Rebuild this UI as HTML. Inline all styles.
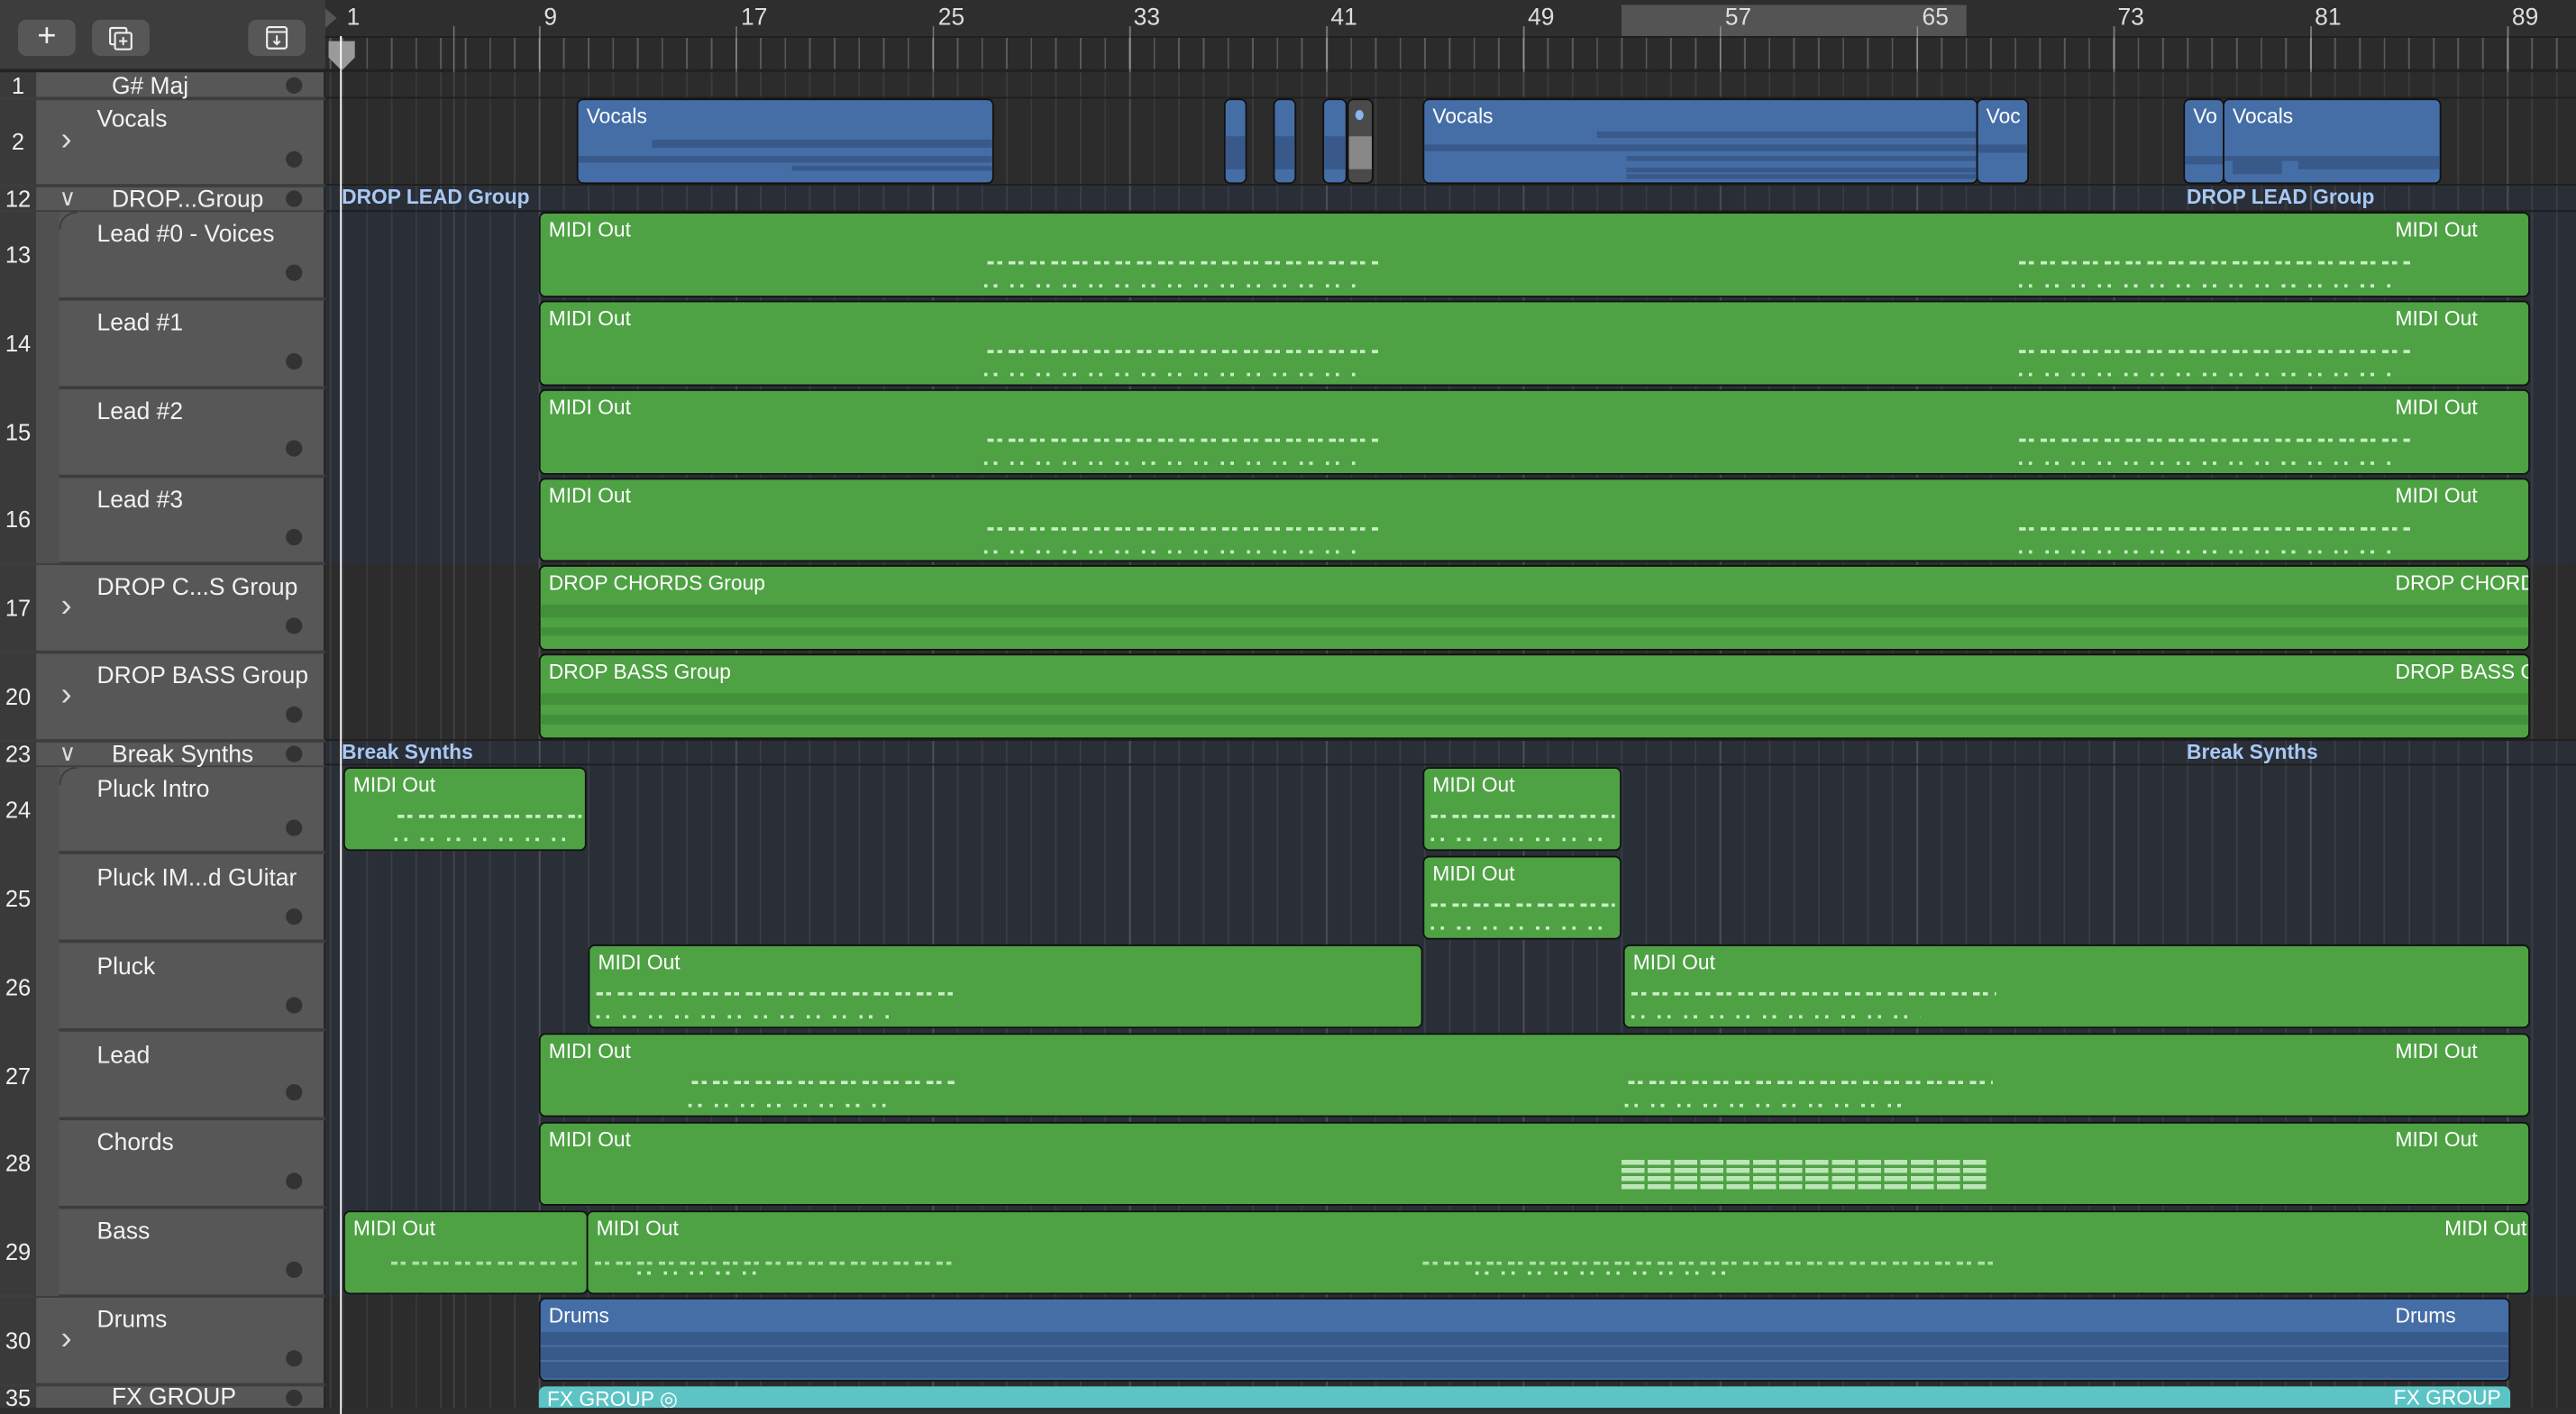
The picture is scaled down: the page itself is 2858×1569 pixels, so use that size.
<!DOCTYPE html>
<html><head><meta charset="utf-8">
<style>
html,body{margin:0;padding:0;background:#262626;overflow:hidden;width:2858px;height:1568px}
#w{position:absolute;left:0;top:0;width:1568px;height:861px;transform:scale(1.82270);transform-origin:0 0;font-family:"Liberation Sans",sans-serif;color:#fff;overflow:hidden;background:#2b2b2b}
.a{position:absolute}
.grid{position:absolute;left:198px;right:0;background-image:repeating-linear-gradient(90deg,rgba(255,255,255,0.07) 0 1px,transparent 1px 14.975px);background-position:10px 0}
.hdr{position:absolute;left:22px;width:175px;background:#575757;border-bottom:1px solid #3c3c3c}
.num{position:absolute;left:0;width:22px;text-align:center;font-size:14px;color:#eee}
.nm{position:absolute;font-size:14.5px;color:#f2f2f2;white-space:nowrap;margin-top:1px}
.dot{position:absolute;left:174px;width:10px;height:10px;border-radius:50%;background:#333}
.g{position:absolute;background:#4ea244;border:1px solid #111;border-radius:4px;box-sizing:border-box;overflow:hidden}
.b{position:absolute;background:#456ea6;border:1px solid #111;border-radius:4px;box-sizing:border-box;overflow:hidden}
.lb{position:absolute;top:3px;font-size:12.5px;color:#fff;white-space:nowrap}
.n1{position:absolute;height:2px;background:repeating-linear-gradient(90deg,#c8eec4 0 4px,transparent 4px 6px,#c8eec4 6px 9px,transparent 9px 13px)}
.n2{position:absolute;height:2px;background:repeating-linear-gradient(90deg,#c8eec4 0 2px,transparent 2px 6px,#c8eec4 6px 8px,transparent 8px 16px)}
.gl{position:absolute;font-size:12.5px;font-weight:bold;color:#a8c9f5}
.ch{position:absolute;left:36px;font-size:14px;color:#ddd}
.cr{position:absolute;left:37px;font-size:20px;line-height:20px;color:#ddd}
</style></head><body><div id="w">

<div class="a" style="left:0;top:0;width:198px;height:44px;background:#3d3d3d;border-bottom:1px solid #2a2a2a"></div>
<div class="a" style="left:11px;top:12px;width:35px;height:22px;background:#575757;border-radius:5px;text-align:center;font-size:20px;line-height:21px;color:#eee">+</div>
<div class="a" style="left:56px;top:12px;width:35px;height:22px;background:#575757;border-radius:5px"><svg width="35" height="22"><rect x="11" y="5" width="10" height="10" fill="none" stroke="#eee" stroke-width="1.2" rx="1"/><rect x="14" y="8" width="10" height="10" fill="#575757" stroke="#eee" stroke-width="1.2" rx="1"/><path d="M19 10.5v5M16.5 13h5" stroke="#eee" stroke-width="1.1"/></svg></div>
<div class="a" style="left:151px;top:12px;width:35px;height:22px;background:#575757;border-radius:5px"><svg width="35" height="22"><rect x="11.5" y="4.5" width="12" height="13" fill="none" stroke="#eee" stroke-width="1.2" rx="1.5"/><path d="M11.5 7.5h12M17.5 9.5v5.5M15.5 13l2 2 2-2" fill="none" stroke="#eee" stroke-width="1.1"/></svg></div>

<div class="a" style="left:198px;top:0;width:1370px;height:22px;background:#2e2e2e"></div>
<div class="a" style="left:987px;top:3px;width:210px;height:19px;background:#545454"></div>
<div class="a" style="left:198px;top:22px;width:1370px;height:22px;background:#2b2b2b;border-top:1px solid #1f1f1f;box-sizing:border-box;background-image:repeating-linear-gradient(90deg,rgba(255,255,255,0.22) 0 1px,transparent 1px 14.975px);background-position:10px 0"></div>
<div class="a" style="left:0;top:42px;width:1568px;height:3px;background:#222"></div>
<div class="a" style="left:198px;top:0;width:1370px;height:44px;background-image:repeating-linear-gradient(90deg,rgba(255,255,255,0.35) 0 1px,transparent 1px 119.8px);background-position:130px 0;background-size:100% 44px;clip-path:inset(16px 0 0 0)"></div>
<div class="a" style="top:3px;left:0;width:1568px;font-size:14.5px;color:#ddd">
<span class="a" style="left:211px">1</span><span class="a" style="left:331px">9</span><span class="a" style="left:451px">17</span><span class="a" style="left:571px">25</span><span class="a" style="left:690px">33</span><span class="a" style="left:810px">41</span><span class="a" style="left:930px">49</span><span class="a" style="left:1050px">57</span><span class="a" style="left:1170px">65</span><span class="a" style="left:1289px">73</span><span class="a" style="left:1409px">81</span><span class="a" style="left:1529px">89</span></div>
<div class="a" style="left:198px;top:5px;width:0;height:0;border-top:6px solid transparent;border-bottom:6px solid transparent;border-left:7px solid #555"></div>

<div class="grid" style="top:44px;height:69px;background-color:#2c2c2c"></div>
<div class="grid" style="top:113px;height:230px;background-color:#2a2e37"></div>
<div class="grid" style="top:343px;height:108px;background-color:#2c2c2c"></div>
<div class="grid" style="top:451px;height:338px;background-color:#2a2e37"></div>
<div class="grid" style="top:789px;height:72px;background-color:#2c2c2c"></div>
<div class="a" style="left:198px;top:44px;width:1370px;height:817px;background-image:repeating-linear-gradient(90deg,rgba(255,255,255,0.1) 0 1px,transparent 1px 119.8px);background-position:130px 0"></div>
<div class="a" style="left:198px;top:59px;width:1370px;height:1px;background:#1e1e1e"></div>
<div class="a" style="left:198px;top:112px;width:1370px;height:1px;background:#1e1e1e"></div>
<div class="a" style="left:198px;top:128px;width:1370px;height:1px;background:#1e1e1e"></div>
<div class="a" style="left:198px;top:450px;width:1370px;height:1px;background:#1e1e1e"></div>
<div class="a" style="left:198px;top:465px;width:1370px;height:1px;background:#1e1e1e"></div>

<div class="a" style="left:0;top:44px;width:22px;height:817px;background:#3a3a3a"></div>
<div class="a" style="left:22px;top:44px;width:176px;height:817px;background:#575757"></div>
<div class="a" style="left:197px;top:44px;width:1px;height:817px;background:#222"></div>
<div class="a" style="left:0;top:59px;width:198px;height:2px;background:#3d3d3d"></div>
<div class="a" style="left:0;top:112px;width:198px;height:2px;background:#3d3d3d"></div>
<div class="a" style="left:0;top:128px;width:198px;height:1px;background:#3d3d3d"></div>
<div class="a" style="left:36px;top:181px;width:162px;height:2px;background:#3d3d3d"></div>
<div class="a" style="left:36px;top:235px;width:162px;height:2px;background:#3d3d3d"></div>
<div class="a" style="left:36px;top:289px;width:162px;height:2px;background:#3d3d3d"></div>
<div class="a" style="left:0;top:342px;width:198px;height:2px;background:#3d3d3d"></div>
<div class="a" style="left:0;top:396px;width:198px;height:2px;background:#3d3d3d"></div>
<div class="a" style="left:0;top:450px;width:198px;height:2px;background:#3d3d3d"></div>
<div class="a" style="left:0;top:466px;width:198px;height:1px;background:#3d3d3d"></div>
<div class="a" style="left:36px;top:518px;width:162px;height:2px;background:#3d3d3d"></div>
<div class="a" style="left:36px;top:572px;width:162px;height:2px;background:#3d3d3d"></div>
<div class="a" style="left:36px;top:626px;width:162px;height:2px;background:#3d3d3d"></div>
<div class="a" style="left:36px;top:680px;width:162px;height:2px;background:#3d3d3d"></div>
<div class="a" style="left:36px;top:734px;width:162px;height:2px;background:#3d3d3d"></div>
<div class="a" style="left:0;top:788px;width:198px;height:2px;background:#3d3d3d"></div>
<div class="a" style="left:0;top:842px;width:198px;height:2px;background:#3d3d3d"></div>
<div class="a" style="left:22px;top:129px;width:14px;height:214px;background:#505050"></div>
<div class="a" style="left:36px;top:129px;width:10px;height:10px;border-left:1px solid #3d3d3d;border-top:1px solid #3d3d3d;border-top-left-radius:10px"></div>
<div class="a" style="left:22px;top:467px;width:14px;height:322px;background:#505050"></div>
<div class="a" style="left:36px;top:467px;width:10px;height:10px;border-left:1px solid #3d3d3d;border-top:1px solid #3d3d3d;border-top-left-radius:10px"></div>

<div class="num" style="top:44px">1</div><div class="nm" style="left:68px;top:44px">G# Maj</div><div class="dot" style="top:47px"></div>
<div class="num" style="top:78px">2</div><div class="nm" style="left:59px;top:64px">Vocals</div><div class="cr" style="top:75px">&#x203A;</div><div class="dot" style="top:92px"></div>
<div class="num" style="top:113px">12</div><div class="nm" style="left:68px;top:113px">DROP...Group</div><div class="ch" style="top:112px">&#x2228;</div><div class="dot" style="top:116px"></div>
<div class="num" style="top:147px">13</div><div class="nm" style="left:59px;top:134px">Lead #0 - Voices</div><div class="dot" style="top:161px"></div>
<div class="num" style="top:201px">14</div><div class="nm" style="left:59px;top:188px">Lead #1</div><div class="dot" style="top:215px"></div>
<div class="num" style="top:255px">15</div><div class="nm" style="left:59px;top:242px">Lead #2</div><div class="dot" style="top:268px"></div>
<div class="num" style="top:308px">16</div><div class="nm" style="left:59px;top:296px">Lead #3</div><div class="dot" style="top:322px"></div>
<div class="num" style="top:362px">17</div><div class="nm" style="left:59px;top:349px">DROP C...S Group</div><div class="cr" style="top:359px">&#x203A;</div><div class="dot" style="top:376px"></div>
<div class="num" style="top:416px">20</div><div class="nm" style="left:59px;top:403px">DROP BASS Group</div><div class="cr" style="top:413px">&#x203A;</div><div class="dot" style="top:430px"></div>
<div class="num" style="top:451px">23</div><div class="nm" style="left:68px;top:451px">Break Synths</div><div class="ch" style="top:450px">&#x2228;</div><div class="dot" style="top:454px"></div>
<div class="num" style="top:485px">24</div><div class="nm" style="left:59px;top:472px">Pluck Intro</div><div class="dot" style="top:499px"></div>
<div class="num" style="top:539px">25</div><div class="nm" style="left:59px;top:526px">Pluck IM...d GUitar</div><div class="dot" style="top:553px"></div>
<div class="num" style="top:593px">26</div><div class="nm" style="left:59px;top:580px">Pluck</div><div class="dot" style="top:607px"></div>
<div class="num" style="top:647px">27</div><div class="nm" style="left:59px;top:634px">Lead</div><div class="dot" style="top:660px"></div>
<div class="num" style="top:700px">28</div><div class="nm" style="left:59px;top:687px">Chords</div><div class="dot" style="top:714px"></div>
<div class="num" style="top:754px">29</div><div class="nm" style="left:59px;top:741px">Bass</div><div class="dot" style="top:768px"></div>
<div class="num" style="top:808px">30</div><div class="nm" style="left:59px;top:795px">Drums</div><div class="cr" style="top:805px">&#x203A;</div><div class="dot" style="top:822px"></div>
<div class="num" style="top:843px">35</div><div class="nm" style="left:68px;top:842px">FX GROUP</div><div class="dot" style="top:846px"></div>

<div class="b" style="left:351px;top:60px;width:254px;height:52px"><div class="lb" style="left:5px">Vocals</div>
<div class="a" style="left:15px;top:24px;width:240px;height:5px;background:#38598a;clip-path:inset(0 0 0 30px)"></div>
<div class="a" style="left:0;top:34px;width:254px;height:4px;background:#38598a"></div>
<div class="a" style="left:130px;top:40px;width:124px;height:3px;background:#38598a"></div></div>
<div class="b" style="left:745px;top:60px;width:14px;height:52px"><div class="a" style="left:0;top:22px;width:14px;height:20px;background:#38598a"></div></div>
<div class="b" style="left:775px;top:60px;width:14px;height:52px"><div class="a" style="left:0;top:22px;width:14px;height:20px;background:#38598a"></div></div>
<div class="b" style="left:805px;top:60px;width:15px;height:52px"><div class="a" style="left:0;top:22px;width:15px;height:20px;background:#38598a"></div></div>
<div class="a" style="left:820px;top:60px;width:16px;height:52px;background:#4a4a4a;border:1px solid #111;border-radius:4px;box-sizing:border-box;overflow:hidden"><div class="a" style="left:4px;top:6px;width:5px;height:6px;border-radius:50%;background:#8ab4f0"></div><div class="a" style="left:0;top:22px;width:16px;height:20px;background:#888"></div></div>
<div class="b" style="left:866px;top:60px;width:338px;height:52px"><div class="lb" style="left:5px">Vocals</div>
<div class="a" style="left:105px;top:19px;width:232px;height:4px;background:#38598a"></div>
<div class="a" style="left:0;top:27px;width:337px;height:4px;background:#38598a"></div>
<div class="a" style="left:123px;top:31px;width:214px;height:3px;background:#38598a;margin-top:3px"></div>
<div class="a" style="left:123px;top:41px;width:214px;height:3px;background:#38598a"></div>
<div class="a" style="left:123px;top:45px;width:214px;height:3px;background:#38598a"></div></div>
<div class="b" style="left:1203px;top:60px;width:32px;height:52px"><div class="lb" style="left:5px">Voc</div><div class="a" style="left:0;top:27px;width:32px;height:5px;background:#38598a"></div></div>
<div class="b" style="left:1329px;top:60px;width:25px;height:52px"><div class="lb" style="left:5px">Vo</div><div class="a" style="left:0;top:34px;width:25px;height:5px;background:#38598a"></div></div>
<div class="b" style="left:1353px;top:60px;width:133px;height:52px"><div class="lb" style="left:5px">Vocals</div><div class="a" style="left:0;top:34px;width:133px;height:3px;background:#38598a"></div><div class="a" style="left:5px;top:37px;width:30px;height:8px;background:#38598a"></div><div class="a" style="left:45px;top:37px;width:88px;height:5px;background:#38598a"></div></div>

<div class="gl" style="left:208px;top:113px">DROP LEAD Group</div><div class="gl" style="left:1331px;top:113px">DROP LEAD Group</div>

<div class="g" style="left:328px;top:129px;width:1212px;height:52px"><div class="lb" style="left:5px">MIDI Out</div><div class="lb" style="left:1129px">MIDI Out</div><div class="n1" style="left:272px;top:29px;width:238px"></div><div class="n1" style="left:900px;top:29px;width:238px"></div><div class="n2" style="left:270px;top:43px;width:230px"></div><div class="n2" style="left:900px;top:43px;width:230px"></div></div>
<div class="g" style="left:328px;top:183px;width:1212px;height:52px"><div class="lb" style="left:5px">MIDI Out</div><div class="lb" style="left:1129px">MIDI Out</div><div class="n1" style="left:272px;top:29px;width:238px"></div><div class="n1" style="left:900px;top:29px;width:238px"></div><div class="n2" style="left:270px;top:43px;width:230px"></div><div class="n2" style="left:900px;top:43px;width:230px"></div></div>
<div class="g" style="left:328px;top:237px;width:1212px;height:52px"><div class="lb" style="left:5px">MIDI Out</div><div class="lb" style="left:1129px">MIDI Out</div><div class="n1" style="left:272px;top:29px;width:238px"></div><div class="n1" style="left:900px;top:29px;width:238px"></div><div class="n2" style="left:270px;top:43px;width:230px"></div><div class="n2" style="left:900px;top:43px;width:230px"></div></div>
<div class="g" style="left:328px;top:291px;width:1212px;height:51px"><div class="lb" style="left:5px">MIDI Out</div><div class="lb" style="left:1129px">MIDI Out</div><div class="n1" style="left:272px;top:29px;width:238px"></div><div class="n1" style="left:900px;top:29px;width:238px"></div><div class="n2" style="left:270px;top:43px;width:230px"></div><div class="n2" style="left:900px;top:43px;width:230px"></div></div>

<div class="g" style="left:328px;top:344px;width:1212px;height:52px"><div class="lb" style="left:5px">DROP CHORDS Group</div><div class="lb" style="left:1129px">DROP CHORD</div><div class="a" style="left:0;top:23px;width:1212px;height:8px;background:#43903a"></div><div class="a" style="left:0;top:37px;width:1212px;height:5px;background:#43903a"></div></div>
<div class="g" style="left:328px;top:398px;width:1212px;height:52px"><div class="lb" style="left:5px">DROP BASS Group</div><div class="lb" style="left:1129px">DROP BASS G</div><div class="a" style="left:0;top:23px;width:1212px;height:7px;background:#43903a"></div><div class="a" style="left:0;top:36px;width:1212px;height:6px;background:#43903a"></div></div>

<div class="gl" style="left:208px;top:451px">Break Synths</div><div class="gl" style="left:1331px;top:451px">Break Synths</div>

<div class="g" style="left:209px;top:467px;width:148px;height:51px"><div class="lb" style="left:5px">MIDI Out</div><div class="n1" style="left:32px;top:28px;width:112px"></div><div class="n2" style="left:30px;top:42px;width:105px"></div></div>
<div class="g" style="left:866px;top:467px;width:121px;height:51px"><div class="lb" style="left:5px">MIDI Out</div><div class="n1" style="left:4px;top:28px;width:112px"></div><div class="n2" style="left:4px;top:42px;width:105px"></div></div>
<div class="g" style="left:866px;top:521px;width:121px;height:51px"><div class="lb" style="left:5px">MIDI Out</div><div class="n1" style="left:4px;top:28px;width:112px"></div><div class="n2" style="left:4px;top:42px;width:105px"></div></div>
<div class="g" style="left:358px;top:575px;width:508px;height:51px"><div class="lb" style="left:5px">MIDI Out</div><div class="n1" style="left:4px;top:28px;width:218px"></div><div class="n2" style="left:4px;top:42px;width:178px"></div></div>
<div class="g" style="left:988px;top:575px;width:552px;height:51px"><div class="lb" style="left:5px">MIDI Out</div><div class="n1" style="left:4px;top:28px;width:222px"></div><div class="n2" style="left:4px;top:42px;width:176px"></div></div>
<div class="g" style="left:328px;top:629px;width:1212px;height:51px"><div class="lb" style="left:5px">MIDI Out</div><div class="lb" style="left:1129px">MIDI Out</div><div class="n1" style="left:92px;top:28px;width:160px"></div><div class="n1" style="left:662px;top:28px;width:222px"></div><div class="n2" style="left:90px;top:42px;width:120px"></div><div class="n2" style="left:660px;top:42px;width:176px"></div></div>
<div class="g" style="left:328px;top:683px;width:1212px;height:51px"><div class="lb" style="left:5px">MIDI Out</div><div class="lb" style="left:1129px">MIDI Out</div>
<div class="a" style="left:658px;top:22px;width:224px;height:20px;background:repeating-linear-gradient(180deg,#c8eec4 0 3px,transparent 3px 5px);opacity:.9;-webkit-mask:repeating-linear-gradient(90deg,#000 0 14px,transparent 14px 16px)"></div></div>
<div class="g" style="left:209px;top:737px;width:149px;height:51px"><div class="lb" style="left:5px">MIDI Out</div><div class="n1" style="left:28px;top:30px;width:116px;opacity:.8"></div></div>
<div class="g" style="left:357px;top:737px;width:1183px;height:51px"><div class="lb" style="left:5px">MIDI Out</div><div class="lb" style="left:1130px">MIDI Out</div><div class="n1" style="left:4px;top:30px;width:218px;opacity:.8"></div><div class="n1" style="left:508px;top:30px;width:350px;opacity:.8"></div><div class="n2" style="left:30px;top:36px;width:80px"></div><div class="n2" style="left:540px;top:36px;width:160px"></div></div>

<div class="b" style="left:328px;top:790px;width:1200px;height:51px"><div class="lb" style="left:5px">Drums</div><div class="lb" style="left:1129px">Drums</div><div class="a" style="left:0;top:20px;width:1200px;height:28px;background:#385a8a"></div><div class="a" style="left:0;top:28px;width:1200px;height:1px;background:#4a70a8"></div><div class="a" style="left:0;top:37px;width:1200px;height:1px;background:#4a70a8"></div></div>
<div class="a" style="left:328px;top:844px;width:1200px;height:17px;background:#5dc4c6;border-radius:4px 4px 0 0"><div class="lb" style="left:5px;top:0">FX GROUP &#x25CE;</div><div class="lb" style="left:1129px;top:0">FX GROUP</div></div>
<div class="a" style="left:0;top:857px;width:1568px;height:4px;background:#2e2e2e"></div>

<div class="a" style="left:207px;top:22px;width:1px;height:839px;background:#fff"></div>
<svg class="a" style="left:199px;top:24px" width="18" height="20"><path d="M1 1h16v10l-8 8-8-8z" fill="#9a9a9a"/></svg>
<div class="a" style="left:207px;top:22px;width:1px;height:20px;background:#fff"></div>
</div></body></html>
